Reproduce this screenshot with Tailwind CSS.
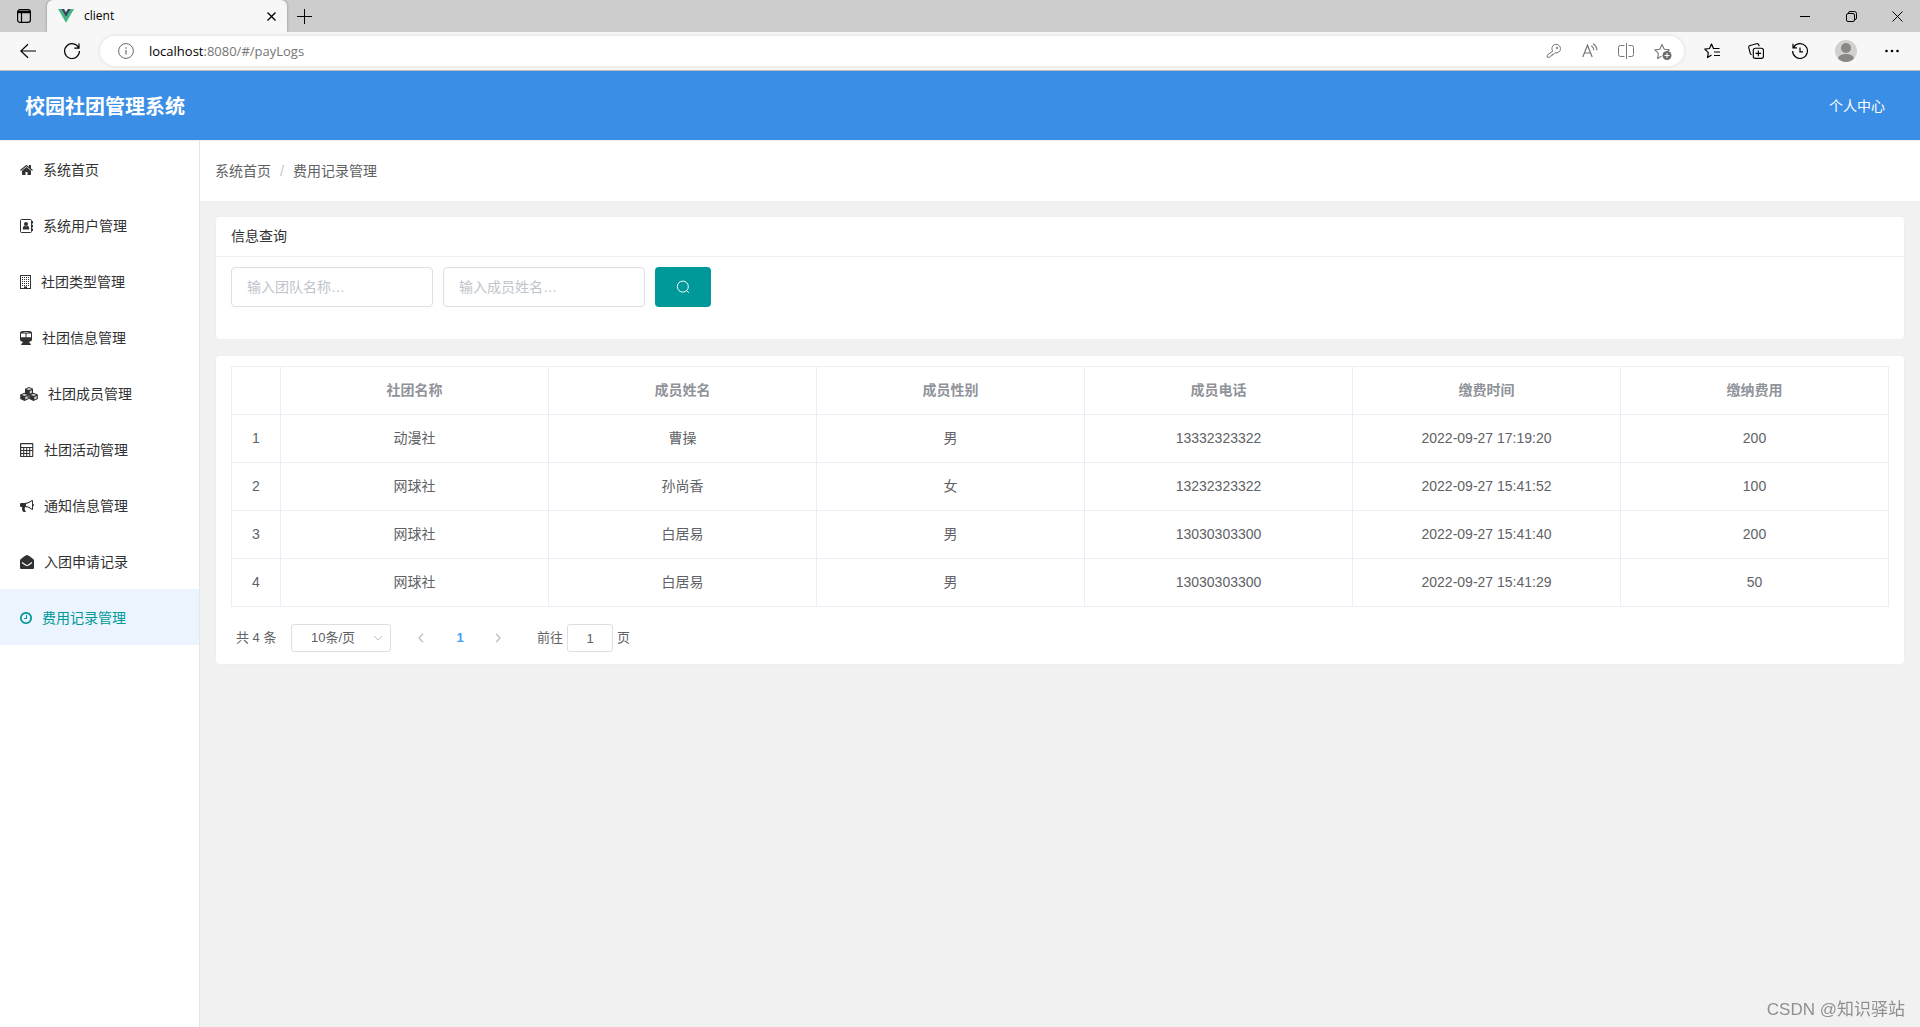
<!DOCTYPE html>
<html lang="zh-CN">
<head>
<meta charset="utf-8">
<title>client</title>
<script src="https://cdn.jsdelivr.net/npm/@tailwindcss/browser@4"></script>
</head>
<body class="flex min-h-screen flex-col bg-[#f1f1f1] font-['Liberation_Sans','Noto_Sans_CJK_SC',sans-serif] text-sm text-[#606266]">

<!-- Browser chrome -->
<div class="font-['Open_Sans','Noto_Sans',sans-serif] text-black">
  <div class="flex h-8 items-stretch bg-[#cdcdcd]">
    <button class="flex w-[47px] items-center justify-center" aria-label="标签页操作">
      <svg class="size-4" viewBox="0 0 16 16" fill="none" stroke="currentColor"><rect x="1.6" y="1.6" width="12.800" height="12.800" rx="2.400" stroke-width="1.200"/><path d="M2 3.500h12M2 4.500h12" stroke-width="1.600"/><path d="M5.500 5v9" stroke-width="1.200"/></svg>
    </button>
    <div class="flex w-60 items-center rounded-t-md bg-[#f7f7f7] pr-2 pl-[11px] shadow-[0_0_3px_#00000055] [clip-path:inset(0_-4px_0_-4px)]">
      <svg class="mr-2.5 h-[14px] w-4" viewBox="0 0 16 14"><path d="M0 0h3.200L8 8.300 12.800 0H16L8 13.800z" fill="#41b883"/><path d="M3.200 0h2.900L8 3.300 9.900 0h2.900L8 8.300z" fill="#35495e"/></svg>
      <span class="flex-1 text-xs">client</span>
      <button class="flex size-4 items-center justify-center" aria-label="关闭标签页"><svg class="size-[9px]" viewBox="0 0 9 9" stroke="currentColor" stroke-width="1.300"><path d="M.5.5l8 8M8.500.5l-8 8"/></svg></button>
    </div>
    <button class="flex w-[35px] items-center justify-center" aria-label="新建标签页"><svg class="size-[15px]" viewBox="0 0 15 15" stroke="currentColor" stroke-width="1"><path d="M7.500 0v15M0 7.500h15"/></svg></button>
    <div class="flex-1"></div>
    <button class="flex w-[46px] items-center justify-center" aria-label="最小化"><svg class="size-2.5" viewBox="0 0 10 10" stroke="currentColor"><path d="M0 5.500h10"/></svg></button>
    <button class="flex w-[46px] items-center justify-center" aria-label="还原"><svg class="size-[11px]" viewBox="0 0 11 11" fill="none" stroke="currentColor"><rect x=".5" y="2.500" width="8" height="8" rx="1.500"/><path d="M2.500 2q0-1.500 1.500-1.500h4.500q2 0 2 2V7q0 1.500-1.500 1.500"/></svg></button>
    <button class="flex w-[46px] items-center justify-center" aria-label="关闭"><svg class="size-[11px]" viewBox="0 0 11 11" stroke="currentColor"><path d="M.5.500l10 10M10.500.500l-10 10"/></svg></button>
  </div>
  <div class="flex h-[39px] items-center border-b border-[#bdbdbd] bg-[#f7f7f7]">
    <button class="ml-5 flex w-4 justify-center" aria-label="后退"><svg class="h-4 w-4" viewBox="0 0 16 16" fill="none" stroke="currentColor" stroke-width="1.200"><path d="M16 8H.800M8 1.200L.800 8 8 14.800"/></svg></button>
    <button class="ml-7 flex w-4 justify-center" aria-label="刷新"><svg class="h-4 w-4" viewBox="0 0 16 16" fill="none" stroke="currentColor" stroke-width="1.200"><path d="M14.800 5.200A7.400 7.400 0 1 0 15.400 8M15 .5v4.700h-4.700"/></svg></button>
    <div class="ml-5 flex h-[30px] flex-1 items-center rounded-full bg-white pr-3 pl-[18px] shadow-[0_0_4px_#0000001c]">
      <svg class="size-4 text-[#6b6b6b]" viewBox="0 0 16 16" fill="none" stroke="currentColor"><circle cx="8" cy="8" r="7.400"/><path d="M8 7v4.500M8 4.200v1.500" stroke-width="1.200"/></svg>
      <a href="#/payLogs" class="ml-[15px] flex-1 text-[13px] text-[#757575]"><span class="text-black">localhost</span>:8080/#/payLogs</a>
      <div class="flex items-center gap-5 text-[#767676]">
        <button aria-label="密码"><svg class="size-4" viewBox="0 0 16 16" fill="none" stroke="currentColor"><path d="M6.700 8.200A4.300 4.300 0 1 1 9 9.800L7.500 11.300H6.200v1.400H4.900L3.600 14.300H1.300v-2.200z" stroke-linejoin="round"/><circle cx="11" cy="5" r=".8"/></svg></button>
        <button aria-label="朗读"><svg class="size-4" viewBox="0 0 16 16" fill="none" stroke="currentColor"><path d="M.8 14L5.500 2.200 10.200 14M2.500 10h6M9.300 2.800a5.500 5.500 0 0 1 2.600 4.500M11 .7a8 8 0 0 1 3.900 6.600" stroke-width="1.200"/></svg></button>
        <button aria-label="分屏"><svg class="size-4" viewBox="0 0 16 16" fill="none" stroke="currentColor"><path d="M6.500 2.500H2.500q-2 0-2 2v7q0 2 2 2h4M10.500 2.500h3q2 0 2 2v7q0 2-2 2h-3M8.500 0v16"/></svg></button>
        <button aria-label="收藏此页"><svg class="h-[17px] w-[18px]" viewBox="0 0 18 17" fill="none" stroke="currentColor"><path d="M7.500 13.200L3.500 15.400l.9-5L.8 6.900l5-.7L8 1.500l2.300 4.700 5 .7-1.500 1.500" stroke-linejoin="round" stroke-width="1.100"/><circle cx="13" cy="12.500" r="4.500" fill="#6b6b6b" stroke="none"/><path d="M13 10v5M10.500 12.500h5" stroke="#fff"/></svg></button>
      </div>
    </div>
    <div class="ml-5 flex items-center gap-7">
      <button aria-label="收藏夹"><svg class="size-4" viewBox="0 0 16 16" fill="none" stroke="currentColor" stroke-width="1.200"><path d="M7.500 12L3.500 14.500l.8-4.800L.8 6.200l4.700-.7L7.500 1l2 4.500h6M10 9h6M10 12.500h6" stroke-linejoin="round"/></svg></button>
      <button aria-label="集锦"><svg class="size-4" viewBox="0 0 17 17" fill="none" stroke="currentColor" stroke-width="1.200"><rect x="5.600" y="5.600" width="10.800" height="10.800" rx="2.200"/><path d="M11 8v6M8 11h6M3.800 12.500Q2.500 12 2.300 10.800L.8 5Q.5 3.200 2.200 2.600L9 .8q2-.4 2.600 1.500l.4 1.200"/></svg></button>
      <button aria-label="历史记录"><svg class="size-4" viewBox="0 0 16 16" fill="none" stroke="currentColor" stroke-width="1.200"><path d="M1.500 4.500A7.400 7.400 0 1 1 .6 8M1 .8v4h4M8 4.500v4.300h3"/></svg></button>
      <button class="-mx-px" aria-label="个人资料"><svg class="size-[22px]" viewBox="0 0 22 22"><circle cx="11" cy="11" r="11" fill="#d2d0ce"/><circle cx="11" cy="8" r="5" fill="#8a8683"/><path d="M3 18.500C4 15 7.500 14 11 14s7 1 8 4.500A11 11 0 0 1 3 18.500z" fill="#8a8683"/></svg></button>
      <button class="mr-5" aria-label="设置及其他"><svg class="h-4 w-4" viewBox="0 0 16 16" fill="currentColor"><circle cx="2.500" cy="8" r="1.300"/><circle cx="8" cy="8" r="1.300"/><circle cx="13.500" cy="8" r="1.300"/></svg></button>
    </div>
  </div>
</div>

<!-- App header -->
<header class="flex h-[69px] items-center justify-between bg-[#3a8ee6] pr-[35px] pl-[25px] text-white">
  <h1 class="pt-0.5 text-xl font-bold">校园社团管理系统</h1>
  <a href="#/profile">个人中心</a>
</header>

<div class="flex flex-1 items-stretch border-t border-[#eee]">
  <!-- Sidebar -->
  <nav class="w-[200px] shrink-0 border-r border-[#e6e6e6] bg-white text-[#303133]">
    <a href="#/home" class="flex h-14 items-center gap-2.5 pt-0.5 pl-5"><svg class="h-3.5 w-[13px]" viewBox="64 100 1664 1600" fill="currentColor"><path d="M1472 992v480q0 26-19 45t-45 19h-384v-384h-256v384h-384q-26 0-45-19t-19-45v-480q0-1 .5-3t.5-3l575-474 575 474q1 2 1 6zm223-69l-62 74q-8 9-21 11h-3q-13 0-21-7l-692-577-692 577q-12 8-24 7-13-2-21-11l-62-74q-8-10-7-23.500t11-21.500l719-599q32-26 76-26t76 26l244 204v-195q0-14 9-23t23-9h192q14 0 23 9t9 23v408l219 182q10 8 11 21.500t-7 23.500z"/></svg>系统首页</a>
    <a href="#/users" class="flex h-14 items-center gap-2.5 pt-0.5 pl-5"><svg class="h-3.5 w-[13px]" viewBox="0 0 13 14" fill="none" stroke="currentColor"><rect x=".5" y=".5" width="11" height="13" rx="1"/><path d="M12.500 2v2.500M12.500 5.800v2.500M12.500 9.500V12"/><circle cx="6" cy="5" r="2" fill="currentColor" stroke="none"/><path d="M2.700 10.500c0-2.500.9-3.800 1.800-3.800q1.500 1 3 0c.9 0 1.800 1.300 1.800 3.800z" fill="currentColor" stroke="none"/></svg>系统用户管理</a>
    <a href="#/types" class="flex h-14 items-center gap-2.5 pt-0.5 pl-5"><svg class="h-3.5 w-[11px]" viewBox="0 0 11 14" fill="none" stroke="currentColor"><rect x=".5" y=".5" width="10" height="13"/><path d="M2 2.500h7M2 4.500h7M2 6.500h7M2 8.500h7M2 10.500h7" stroke-dasharray="1 1"/><path d="M4 12.500h3" stroke-width="2"/></svg>社团类型管理</a>
    <a href="#/teams" class="flex h-14 items-center gap-2.5 pt-0.5 pl-5"><svg class="h-3.5 w-3" viewBox="0 0 12 14" fill="currentColor"><path fill-rule="evenodd" d="M3 0h6q3 0 3 2v6.500q0 2-2.200 2.200L8.800 11l2 2v1H1.200v-1l2-2-1-.3Q0 10.500 0 8.500V2Q0 0 3 0zM1 2.500v3.800h4.500V2.500zm5.500 0v3.800H11V2.500zM3.500.9v.7h5V.9z"/></svg>社团信息管理</a>
    <a href="#/members" class="flex h-14 items-center gap-2.5 pt-0.5 pl-5"><svg class="h-3.5 w-[18px]" viewBox="0 0 18 14"><path d="M9 0l4 1.700v4.600L9 8.100 5 6.300V1.700zM4.500 5.800l4.300 1.800v4.500l-4.300 1.900-4.300-1.900V7.600zM13.500 5.800l4.300 1.800v4.500L13.500 14l-4.300-1.900V7.600z" fill="currentColor"/><path d="M6.200 2L9 .9 11.800 2 9 3.200zM9.700 4.200v2.500L12 5.700V3.200zM1.700 7.900l2.800-1.100 2.800 1.100-2.800 1.200zM5.200 10.100v2.500l2.500-1.100V9zM10.700 7.900l2.800-1.100 2.800 1.100-2.800 1.200zM14.200 10.100v2.500l2.500-1.100V9z" fill="#fff" fill-opacity=".75"/></svg>社团成员管理</a>
    <a href="#/activities" class="flex h-14 items-center gap-2.5 pt-0.5 pl-5"><svg class="size-3.5" viewBox="0 0 14 14"><path fill="currentColor" fill-rule="evenodd" d="M1 0h11.500q.8 0 .8.800v12.400q0 .8-.8.800H.8q-.8 0-.8-.8V.8Q0 0 1 0zM1.200 1.200V4h11V1.200zM1.200 5v2h2V5zm3 0v2h2V5zm3 0v2h2V5zm3 0v2h2V5zM1.200 8v2h2V8zm3 0v2h2V8zm3 0v2h2V8zM1.200 11v2h2v-2zm3 0v2h2v-2zm3 0v2h2v-2zm3-3v5h2V8z"/></svg>社团活动管理</a>
    <a href="#/notices" class="flex h-14 items-center gap-2.5 pt-0.5 pl-5"><svg class="size-3.5" viewBox="0 0 1792 1792" fill="currentColor"><path d="M1664 640q53 0 90.500 37.500t37.500 90.500-37.500 90.500-90.500 37.500v384q0 52-38 90t-90 38q-417-347-812-380-58 19-91 66t-31 100.500 40 92.500q-20 33-23 65.500t6 58 33.500 55 48 50 61.500 50.500q-29 58-111.500 83t-168.500 11.500-132-55.500q-7-23-29.500-87.500t-32-94.500-23-89-15-101 3.500-98.500 22-110.500h-122q-66 0-113-47t-47-113v-192q0-66 47-113t113-47h480q435 0 896-384 52 0 90 38t38 90v384zm-128 604v-954q-394 302-768 343v270q377 42 768 341z"/></svg>通知信息管理</a>
    <a href="#/applyLogs" class="flex h-14 items-center gap-2.5 pt-0.5 pl-5"><svg class="size-3.5" viewBox="0 0 14 14"><path d="M7 0q1 0 3 1.600l3.400 2.700q.6.500.6 1.200v7.200q0 1.300-1.300 1.300H1.300Q0 14 0 12.700V5.500q0-.7.600-1.200L4 1.600Q6 0 7 0z" fill="currentColor"/><path d="M2 7.500l3.200 2.300q1.800 1.300 3.600 0L12 7.500" fill="none" stroke="#fff" stroke-width="1.100"/></svg>入团申请记录</a>
    <a href="#/payLogs" aria-current="page" class="flex h-14 items-center gap-2.5 bg-[#ebf4ff] pt-0.5 pl-5 text-[#009999]"><svg class="size-3" viewBox="128 128 1536 1536" fill="currentColor"><path d="M1024 544v448q0 14-9 23t-23 9h-320q-14 0-23-9t-9-23v-64q0-14 9-23t23-9h224v-352q0-14 9-23t23-9h64q14 0 23 9t9 23zm416 352q0-148-73-273t-198-198-273-73-273 73-198 198-73 273 73 273 198 198 273 73 273-73 198-198 73-273zm224 0q0 209-103 385.500t-279.500 279.500-385.500 103-385.500-103-279.500-279.500-103-385.500 103-385.500 279.500-279.500 385.500-103 385.500 103 279.500 279.500 103 385.500z"/></svg>费用记录管理</a>
  </nav>

  <main class="min-w-0 flex-1">
    <div class="flex h-[60px] items-center gap-2 bg-white pl-[15px]">
      <a href="#/home">系统首页</a><span class="px-px text-[#c0c4cc]">/</span><span>费用记录管理</span>
    </div>

    <div class="flex flex-col gap-[15px] p-[15px]">
      <section class="rounded border border-[#ebeef5] bg-white">
        <h2 class="border-b border-[#ebeef5] px-[15px] pt-[9px] pb-2.5 text-[#303133]">信息查询</h2>
        <form class="flex gap-2.5 px-[15px] pt-2.5 pb-8">
          <input type="text" aria-label="团队名称" placeholder="输入团队名称…" class="h-10 w-[202px] rounded border border-[#dcdfe6] px-[15px] placeholder:text-[#c0c4cc]">
          <input type="text" aria-label="成员姓名" placeholder="输入成员姓名…" class="h-10 w-[202px] rounded border border-[#dcdfe6] px-[15px] placeholder:text-[#c0c4cc]">
          <button type="button" aria-label="查询" class="flex h-10 w-14 items-center justify-center rounded bg-[#009999] text-white"><svg class="size-3.5" viewBox="0 0 14 14" fill="none" stroke="currentColor"><circle cx="6.800" cy="6.600" r="5.500"/><path d="M10.600 10.500l2.200 2.300"/></svg></button>
        </form>
      </section>

      <section class="rounded border border-[#ebeef5] bg-white px-[15px] pt-2.5 pb-3">
        <table class="w-full table-fixed border-collapse text-center [&_td]:border [&_td]:border-[#ebeef5] [&_td]:pb-0.5 [&_th]:border [&_th]:border-[#ebeef5] [&_th]:pb-0.5 [&_tr]:h-12">
          <thead class="text-[#909399]">
            <tr><th class="w-[49px]"></th><th>社团名称</th><th>成员姓名</th><th>成员性别</th><th>成员电话</th><th>缴费时间</th><th>缴纳费用</th></tr>
          </thead>
          <tbody>
            <tr><td>1</td><td>动漫社</td><td>曹操</td><td>男</td><td>13332323322</td><td>2022-09-27 17:19:20</td><td>200</td></tr>
            <tr><td>2</td><td>网球社</td><td>孙尚香</td><td>女</td><td>13232323322</td><td>2022-09-27 15:41:52</td><td>100</td></tr>
            <tr><td>3</td><td>网球社</td><td>白居易</td><td>男</td><td>13030303300</td><td>2022-09-27 15:41:40</td><td>200</td></tr>
            <tr><td>4</td><td>网球社</td><td>白居易</td><td>男</td><td>13030303300</td><td>2022-09-27 15:41:29</td><td>50</td></tr>
          </tbody>
        </table>
        <div class="mt-[17px] flex h-7 items-center pl-[5px] text-[13px]">
          <span class="w-[55px]">共 4 条</span>
          <div class="relative">
            <select aria-label="每页条数" class="h-7 w-[100px] appearance-none rounded-[3px] border border-[#dcdfe6] bg-white pl-[19px]"><option>10条/页</option></select>
            <svg class="pointer-events-none absolute top-2.5 right-2 h-2 w-2.5 text-[#c0c4cc]" viewBox="0 0 10 8" fill="none" stroke="currentColor"><path d="M1 2l4 4 4-4"/></svg>
          </div>
          <button class="ml-[15px] flex h-7 w-[30px] items-center justify-center text-[#c0c4cc]" aria-label="上一页"><svg class="h-2.5 w-2" viewBox="0 0 8 10" fill="none" stroke="currentColor" stroke-width="1.500"><path d="M6 .8L2 5l4 4.200"/></svg></button>
          <button class="ml-[9px] h-7 w-[30px] font-bold text-[#409eff]" aria-current="page">1</button>
          <button class="ml-2 flex h-7 w-[30px] items-center justify-center text-[#c0c4cc]" aria-label="下一页"><svg class="h-2.5 w-2" viewBox="0 0 8 10" fill="none" stroke="currentColor" stroke-width="1.500"><path d="M2 .8L6 5 2 9.200"/></svg></button>
          <label for="page-jump" class="ml-6">前往</label>
          <input id="page-jump" type="text" value="1" class="mx-1 h-7 w-[46px] rounded-[3px] border border-[#dcdfe6] text-center">
          <span>页</span>
        </div>
      </section>
    </div>
  </main>
</div>

<div class="pointer-events-none fixed right-[15px] bottom-[5px] text-[17px] text-[#8f8f8f]">CSDN @知识驿站</div>
</body>
</html>
